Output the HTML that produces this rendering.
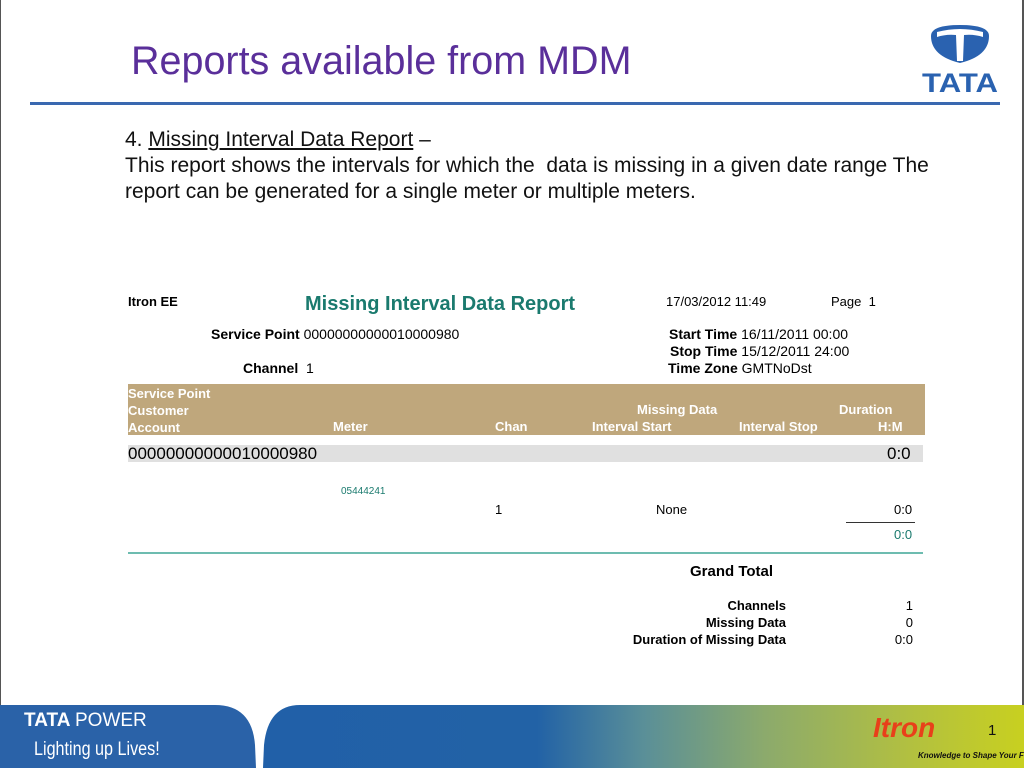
<!DOCTYPE html>
<html><head><meta charset="utf-8"><style>
*{margin:0;padding:0;box-sizing:border-box}
body{width:1024px;height:768px;position:relative;overflow:hidden;background:#fff;font-family:"Liberation Sans",sans-serif}
.a{position:absolute;white-space:nowrap}
.n{font-family:"Liberation Sans Narrow","Liberation Sans",sans-serif}
.b{font-weight:bold}
.r{text-align:right}
</style></head><body>
<div class="a" style="left:0;top:0;width:1px;height:768px;background:#555"></div>
<div class="a" style="right:0;top:0;width:2px;height:768px;background:#555"></div>
<div class="a" style="left:131px;top:39px;font-size:39.5px;color:#5a2f9a">Reports available from MDM</div>
<div class="a" style="left:30px;top:102px;width:970px;height:3px;background:#3a68b0"></div>
<svg class="a" style="left:918px;top:22px" width="84" height="72" viewBox="0 0 84 72">
<path d="M13 14 Q13 3 42 3 Q71 3 71 14 Q71 34 42 41 Q13 34 13 14Z" fill="#2a62b0"/>
<path d="M19 10 Q42 4 65 10 L65 15 Q56 12 46 13 L45 39 L39 39 L38 13 Q28 12 19 15Z" fill="#fff"/>
<text x="42" y="70" font-family="Liberation Sans" font-weight="bold" font-size="27" fill="#2a62b0" text-anchor="middle" textLength="76" lengthAdjust="spacingAndGlyphs">TATA</text>
</svg>
<div class="a" style="left:125px;top:127px;font-size:21px;line-height:26px;color:#111;white-space:normal;width:830px">4. <u>Missing Interval Data Report</u> –<br>This report shows the intervals for which the&nbsp; data is missing in a given date range The report can be generated for a single meter or multiple meters.</div>

<div class="a n b" style="left:128px;top:294px;font-size:13px">Itron EE</div>
<div class="a n b" style="left:305px;top:293px;font-size:20px;color:#1a7a6e">Missing Interval Data Report</div>
<div class="a n" style="left:666px;top:294px;font-size:13px">17/03/2012 11:49</div>
<div class="a n" style="left:831px;top:294px;font-size:13px">Page&nbsp; 1</div>
<div class="a n" style="left:211px;top:326px;font-size:14px"><b>Service Point</b> 00000000000010000980</div>
<div class="a n" style="left:669px;top:326px;font-size:14px"><b>Start Time</b> 16/11/2011 00:00</div>
<div class="a n" style="left:670px;top:343px;font-size:14px"><b>Stop Time</b> 15/12/2011 24:00</div>
<div class="a n" style="left:243px;top:360px;font-size:14px"><b>Channel</b>&nbsp; 1</div>
<div class="a n" style="left:668px;top:360px;font-size:14px"><b>Time Zone</b> GMTNoDst</div>

<div class="a" style="left:128px;top:384px;width:797px;height:51px;background:#bfa77c"></div>
<div class="a n b" style="left:128px;top:385px;font-size:13px;line-height:17px;color:#fff">Service Point<br>Customer<br>Account</div>
<div class="a n b" style="left:333px;top:419px;font-size:13px;color:#fff">Meter</div>
<div class="a n b" style="left:495px;top:419px;font-size:13px;color:#fff">Chan</div>
<div class="a n b" style="left:592px;top:419px;font-size:13px;color:#fff">Interval Start</div>
<div class="a n b" style="left:637px;top:402px;font-size:13px;color:#fff">Missing Data</div>
<div class="a n b" style="left:739px;top:419px;font-size:13px;color:#fff">Interval Stop</div>
<div class="a n b" style="left:839px;top:402px;font-size:13px;color:#fff">Duration</div>
<div class="a n b" style="left:878px;top:419px;font-size:13px;color:#fff">H:M</div>

<div class="a" style="left:128px;top:445px;width:795px;height:17px;background:#e0e0e0"></div>
<div class="a" style="left:128px;top:444px;font-size:17px">00000000000010000980</div>
<div class="a" style="left:887px;top:444px;font-size:17px">0:0</div>
<div class="a n" style="left:341px;top:486px;font-size:10px;color:#1a7a6e">05444241</div>
<div class="a n" style="left:495px;top:502px;font-size:13px">1</div>
<div class="a n" style="left:656px;top:502px;font-size:13px">None</div>
<div class="a n" style="left:894px;top:502px;font-size:13px">0:0</div>
<div class="a" style="left:846px;top:522px;width:69px;height:1px;background:#333"></div>
<div class="a n" style="left:894px;top:527px;font-size:13px;color:#1a7a6e">0:0</div>
<div class="a" style="left:128px;top:552px;width:795px;height:2px;background:#6dbcb0"></div>
<div class="a b" style="left:690px;top:563px;font-size:15px">Grand Total</div>
<div class="a n b r" style="left:560px;width:226px;top:597px;font-size:13px;line-height:17px">Channels<br>Missing Data<br>Duration of Missing Data</div>
<div class="a n r" style="left:870px;width:43px;top:597px;font-size:13px;line-height:17px">1<br>0<br>0:0</div>

<svg class="a" style="left:0;top:705px" width="1024" height="63" viewBox="0 0 1024 63">
<defs><linearGradient id="g" x1="0" x2="1" y1="0" y2="0">
<stop offset="0" stop-color="#2160a8"/><stop offset="0.36" stop-color="#2262a6"/><stop offset="0.5" stop-color="#5a8f98"/><stop offset="0.66" stop-color="#8caa6c"/><stop offset="0.85" stop-color="#b2c040"/><stop offset="1" stop-color="#c8d020"/></linearGradient></defs>
<path d="M0 0 L215 0 Q252 0 255 40 L256 63 L0 63Z" fill="#2a62a8"/>
<path d="M263 63 L264 40 Q268 0 300 0 L1024 0 L1024 63Z" fill="url(#g)"/>
</svg>
<div class="a b" style="left:24px;top:710px;font-size:19px;color:#fff">TATA <span style="font-weight:normal">POWER</span></div>
<div class="a" style="left:34px;top:739px;font-size:19px;color:#fff;transform:scaleX(0.85);transform-origin:left">Lighting up Lives!</div>
<div class="a b" style="left:873px;top:712px;font-size:28px;font-style:italic;color:#e8401a">Itron</div>
<div class="a" style="left:988px;top:722px;font-size:15px;color:#111">1</div>
<div class="a b" style="left:918px;top:751px;font-size:8px;font-style:italic;color:#111">Knowledge to Shape Your Future</div>
</body></html>
